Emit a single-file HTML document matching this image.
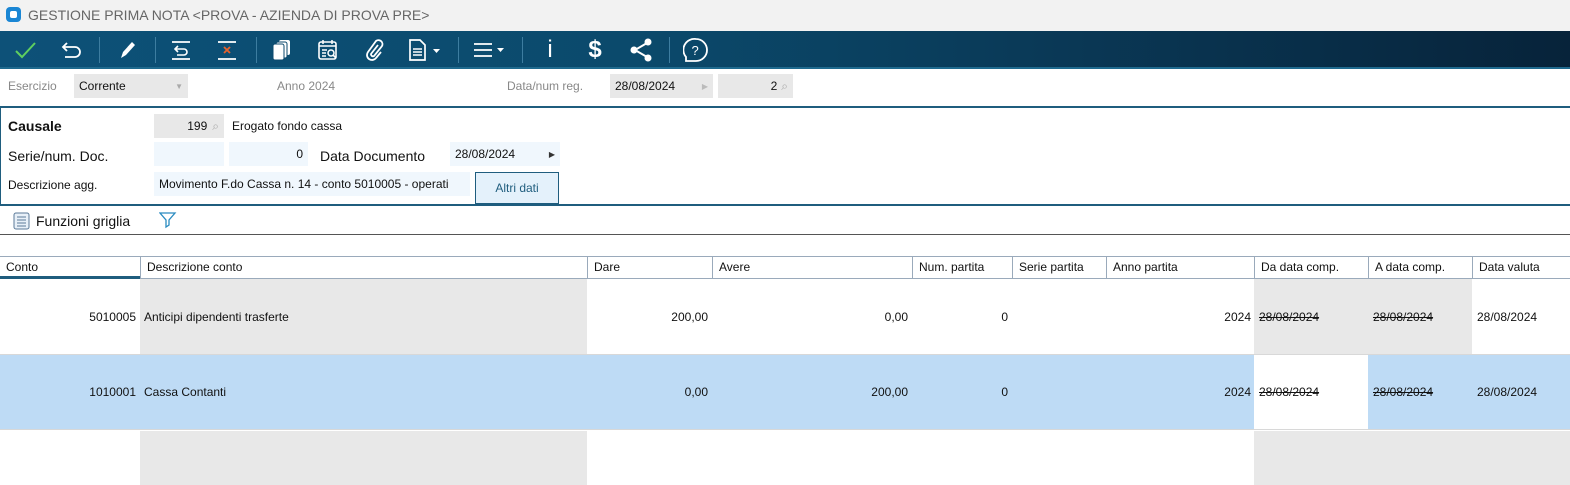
<!DOCTYPE html>
<html><head><meta charset="utf-8"><style>
*{box-sizing:border-box;margin:0;padding:0}
body{width:1570px;height:485px;overflow:hidden;background:#fff;font-family:"Liberation Sans",sans-serif;font-size:12px;color:#111;position:relative}
.a{position:absolute;white-space:nowrap}
.tb{left:0;top:31px;width:1570px;height:38px;background:linear-gradient(90deg,#0d5178 0%,#0b4a6c 40%,#0a3a58 65%,#07233a 100%);border-bottom:2px solid #1f6a8e}
.sep{position:absolute;top:6px;width:1px;height:26px;background:#3d7da0}
.ic{position:absolute;top:0;height:38px;display:flex;align-items:center;justify-content:center}
.fld{position:absolute;height:24px;background:#f0f7fd;display:flex;align-items:center;padding:0 5px}
.g{background:#e8e8e8}
.hd{position:absolute;top:256px;height:23px;border-top:1px solid #9aaabb;border-bottom:1px solid #9aaabb;background:#fff;line-height:21px;padding-left:6px;border-left:1px solid #9aaabb}
.c{position:absolute;height:76px;line-height:76px;padding:0 4px;text-align:right}
.s{text-decoration:line-through}
</style></head><body>
<div class="a" style="left:0;top:0;width:1570px;height:31px;background:#f2f2f2"></div>
<div class="a" style="left:6px;top:7px;width:15px;height:15px;border-radius:4px;background:#1a86d4"><div style="position:absolute;left:4px;top:4px;width:7px;height:7px;background:#fff;border-radius:2px"></div></div>
<div class="a" style="left:28px;top:7px;font-size:14px;color:#666">GESTIONE PRIMA NOTA &lt;PROVA - AZIENDA DI PROVA PRE&gt;</div>

<div class="a tb">
<div class="ic" style="left:10px;width:30px"><svg width="24" height="20"><path d="M3 11l6 6L22 3" stroke="#5fcf5f" stroke-width="2" fill="none"/></svg></div>
<div class="ic" style="left:57px;width:30px"><svg width="24" height="22"><path d="M7 4L3 8l4 4M3 8h12a5 5 0 010 10H5" stroke="#fff" stroke-width="1.8" fill="none"/></svg></div>
<div class="sep" style="left:99px"></div>
<div class="ic" style="left:112px;width:30px"><svg width="22" height="22"><path d="M5 19l2-6L16 3l3 3-9 10z" fill="#fff"/></svg></div>
<div class="sep" style="left:155px"></div>
<div class="ic" style="left:166px;width:30px"><svg width="24" height="24"><path d="M3 4h18M3 21h18" stroke="#fff" stroke-width="1.8"/><path d="M9 8L6 11l3 3M6 11h9a3 3 0 010 6H8" stroke="#fff" stroke-width="1.6" fill="none"/></svg></div>
<div class="ic" style="left:212px;width:30px"><svg width="24" height="24"><path d="M3 4h18M3 21h18" stroke="#fff" stroke-width="1.8"/><path d="M9 9l6 6M15 9l-6 6" stroke="#e8612c" stroke-width="1.8"/></svg></div>
<div class="sep" style="left:256px"></div>
<div class="ic" style="left:267px;width:30px"><svg width="22" height="24"><rect x="8" y="2" width="11" height="15" rx="2" fill="#fff"/><rect x="5" y="4" width="11" height="16" rx="2" fill="#fff" stroke="#0c4a6e"/><rect x="2" y="6" width="11" height="16" rx="2" fill="#fff" stroke="#0c4a6e"/></svg></div>
<div class="ic" style="left:313px;width:30px"><svg width="24" height="24"><rect x="3" y="4" width="17" height="17" rx="2" stroke="#fff" stroke-width="1.6" fill="none"/><path d="M3 8h17M7 2v4M16 2v4M6 12h5M6 15h4M6 18h4" stroke="#fff" stroke-width="1.5"/><circle cx="15" cy="15" r="3" stroke="#fff" stroke-width="1.5" fill="none"/><path d="M17 17l3 3" stroke="#fff" stroke-width="1.6"/></svg></div>
<div class="ic" style="left:359px;width:30px"><svg width="22" height="24"><path d="M15 7l-7 9a2 2 0 003 2l8-10a4 4 0 00-6-5L5 14a5 5 0 008 6l5-6" stroke="#fff" stroke-width="1.8" fill="none"/></svg></div>
<div class="ic" style="left:405px;width:40px"><svg width="36" height="24"><path d="M3 2h10l5 5v15H3z" stroke="#fff" stroke-width="1.7" fill="none"/><path d="M6 11h9M6 14h9M6 17h9" stroke="#fff" stroke-width="1.4"/><path d="M26 11h7l-3.5 4z" fill="#fff"/></svg></div>
<div class="sep" style="left:458px"></div>
<div class="ic" style="left:469px;width:40px"><svg width="36" height="24"><path d="M3 6h18M3 12h18M3 18h18" stroke="#fff" stroke-width="1.8"/><path d="M26 10h7l-3.5 4z" fill="#fff"/></svg></div>
<div class="sep" style="left:522px"></div>
<div class="ic" style="left:535px;width:30px;color:#fff;font-size:24px;font-weight:300">i</div>
<div class="ic" style="left:580px;width:30px;color:#fff;font-size:24px;font-weight:bold">$</div>
<div class="ic" style="left:626px;width:30px"><svg width="26" height="26"><path d="M7 13L19 6M7 13l12 7" stroke="#fff" stroke-width="2"/><circle cx="6" cy="13" r="3.5" fill="#fff"/><circle cx="20" cy="5" r="3.5" fill="#fff"/><circle cx="20" cy="21" r="3.5" fill="#fff"/></svg></div>
<div class="sep" style="left:669px"></div>
<div class="ic" style="left:681px;width:30px"><svg width="26" height="26"><path d="M13 2a11 11 0 110 22H3v-4a11 11 0 0110-18z" stroke="#fff" stroke-width="1.8" fill="none"/><text x="8.5" y="18" fill="#fff" font-size="13" font-family="Liberation Sans">?</text></svg></div>
</div>

<div class="a" style="left:8px;top:79px;color:#888">Esercizio</div>
<div class="fld g" style="left:74px;top:74px;width:114px">Corrente<span style="margin-left:auto;color:#aaa;font-size:8px">▼</span></div>
<div class="a" style="left:277px;top:79px;color:#888">Anno 2024</div>
<div class="a" style="left:507px;top:79px;color:#888">Data/num reg.</div>
<div class="fld g" style="left:610px;top:74px;width:103px">28/08/2024<span style="margin-left:auto;color:#bbb;font-size:8px">▶</span></div>
<div class="fld g" style="left:718px;top:74px;width:75px;justify-content:flex-end">2 <span style="color:#aaa;margin-left:4px">⌕</span></div>
<div class="a" style="left:0;top:106px;width:1570px;height:100px;border-top:2px solid #1f5d7e;border-bottom:2px solid #1f5d7e;border-left:1px solid #1f5d7e"></div>
<div class="a" style="left:8px;top:118px;font-size:14px;font-weight:bold">Causale</div>
<div class="fld g" style="left:154px;top:114px;width:70px;justify-content:flex-end">199 <span style="color:#aaa;margin-left:5px">⌕</span></div>
<div class="a" style="left:232px;top:119px">Erogato fondo cassa</div>
<div class="a" style="left:8px;top:148px;font-size:14px">Serie/num. Doc.</div>
<div class="fld" style="left:154px;top:142px;width:70px"></div>
<div class="fld" style="left:229px;top:142px;width:79px;justify-content:flex-end">0</div>
<div class="a" style="left:320px;top:148px;font-size:14px">Data Documento</div>
<div class="fld" style="left:450px;top:142px;width:110px">28/08/2024<span style="margin-left:auto;font-size:8px;color:#333">▶</span></div>
<div class="a" style="left:8px;top:178px">Descrizione agg.</div>
<div class="fld" style="left:154px;top:172px;width:316px;overflow:hidden">Movimento F.do Cassa n. 14 - conto 5010005 - operati</div>
<div class="a" style="left:475px;top:172px;width:84px;height:32px;border:1px solid #1f5d7e;background:#e4f1fb;color:#1f5d7e;text-align:center;line-height:30px">Altri dati</div>
<svg class="a" style="left:13px;top:212px" width="18" height="18"><rect x="1" y="1" width="15" height="16" rx="2" fill="#e8f0f8" stroke="#5b7a99"/><path d="M4 5h9M4 8h9M4 11h9M4 14h9" stroke="#5b7a99"/></svg>
<div class="a" style="left:36px;top:213px;font-size:14px">Funzioni griglia</div>
<svg class="a" style="left:159px;top:211px" width="18" height="20"><path d="M1 2h15l-6 7v5l-3 2V9z" fill="none" stroke="#2a8bc0" stroke-width="1.3"/></svg>
<div class="a" style="left:0;top:234px;width:1570px;height:1px;background:#555"></div>

<div class="hd" style="left:0;width:140px;border-left:0;border-bottom:3px solid #1f5d7e">Conto</div>
<div class="hd" style="left:140px;width:447px">Descrizione conto</div>
<div class="hd" style="left:587px;width:125px">Dare</div>
<div class="hd" style="left:712px;width:200px">Avere</div>
<div class="hd" style="left:912px;width:100px">Num. partita</div>
<div class="hd" style="left:1012px;width:94px">Serie partita</div>
<div class="hd" style="left:1106px;width:148px">Anno partita</div>
<div class="hd" style="left:1254px;width:114px">Da data comp.</div>
<div class="hd" style="left:1368px;width:104px">A data comp.</div>
<div class="hd" style="left:1472px;width:98px">Data valuta</div>

<div class="a" style="left:140px;top:279px;width:447px;height:75px;background:#e8e8e8"></div>
<div class="a" style="left:1254px;top:279px;width:218px;height:75px;background:#e8e8e8"></div>
<div class="a" style="left:0;top:354px;width:1570px;height:76px;background:#bedbf5;border-top:1px solid #d8d8d8;border-bottom:1px solid #d8d8d8"></div>
<div class="a" style="left:1254px;top:355px;width:114px;height:74px;background:#fff"></div>
<div class="a" style="left:140px;top:431px;width:447px;height:54px;background:#e8e8e8"></div>
<div class="a" style="left:1254px;top:431px;width:316px;height:54px;background:#e8e8e8"></div>

<div class="c" style="left:0;top:279px;width:140px">5010005</div>
<div class="c" style="left:140px;top:279px;text-align:left">Anticipi dipendenti trasferte</div>
<div class="c" style="left:587px;top:279px;width:125px">200,00</div>
<div class="c" style="left:712px;top:279px;width:200px">0,00</div>
<div class="c" style="left:912px;top:279px;width:100px">0</div>
<div class="c" style="left:1106px;top:279px;width:149px">2024</div>
<div class="c s" style="left:1255px;top:279px;text-align:left">28/08/2024</div>
<div class="c s" style="left:1369px;top:279px;text-align:left">28/08/2024</div>
<div class="c" style="left:1473px;top:279px;text-align:left">28/08/2024</div>

<div class="c" style="left:0;top:354px;width:140px">1010001</div>
<div class="c" style="left:140px;top:354px;text-align:left">Cassa Contanti</div>
<div class="c" style="left:587px;top:354px;width:125px">0,00</div>
<div class="c" style="left:712px;top:354px;width:200px">200,00</div>
<div class="c" style="left:912px;top:354px;width:100px">0</div>
<div class="c" style="left:1106px;top:354px;width:149px">2024</div>
<div class="c s" style="left:1255px;top:354px;text-align:left">28/08/2024</div>
<div class="c s" style="left:1369px;top:354px;text-align:left">28/08/2024</div>
<div class="c" style="left:1473px;top:354px;text-align:left">28/08/2024</div>
</body></html>
